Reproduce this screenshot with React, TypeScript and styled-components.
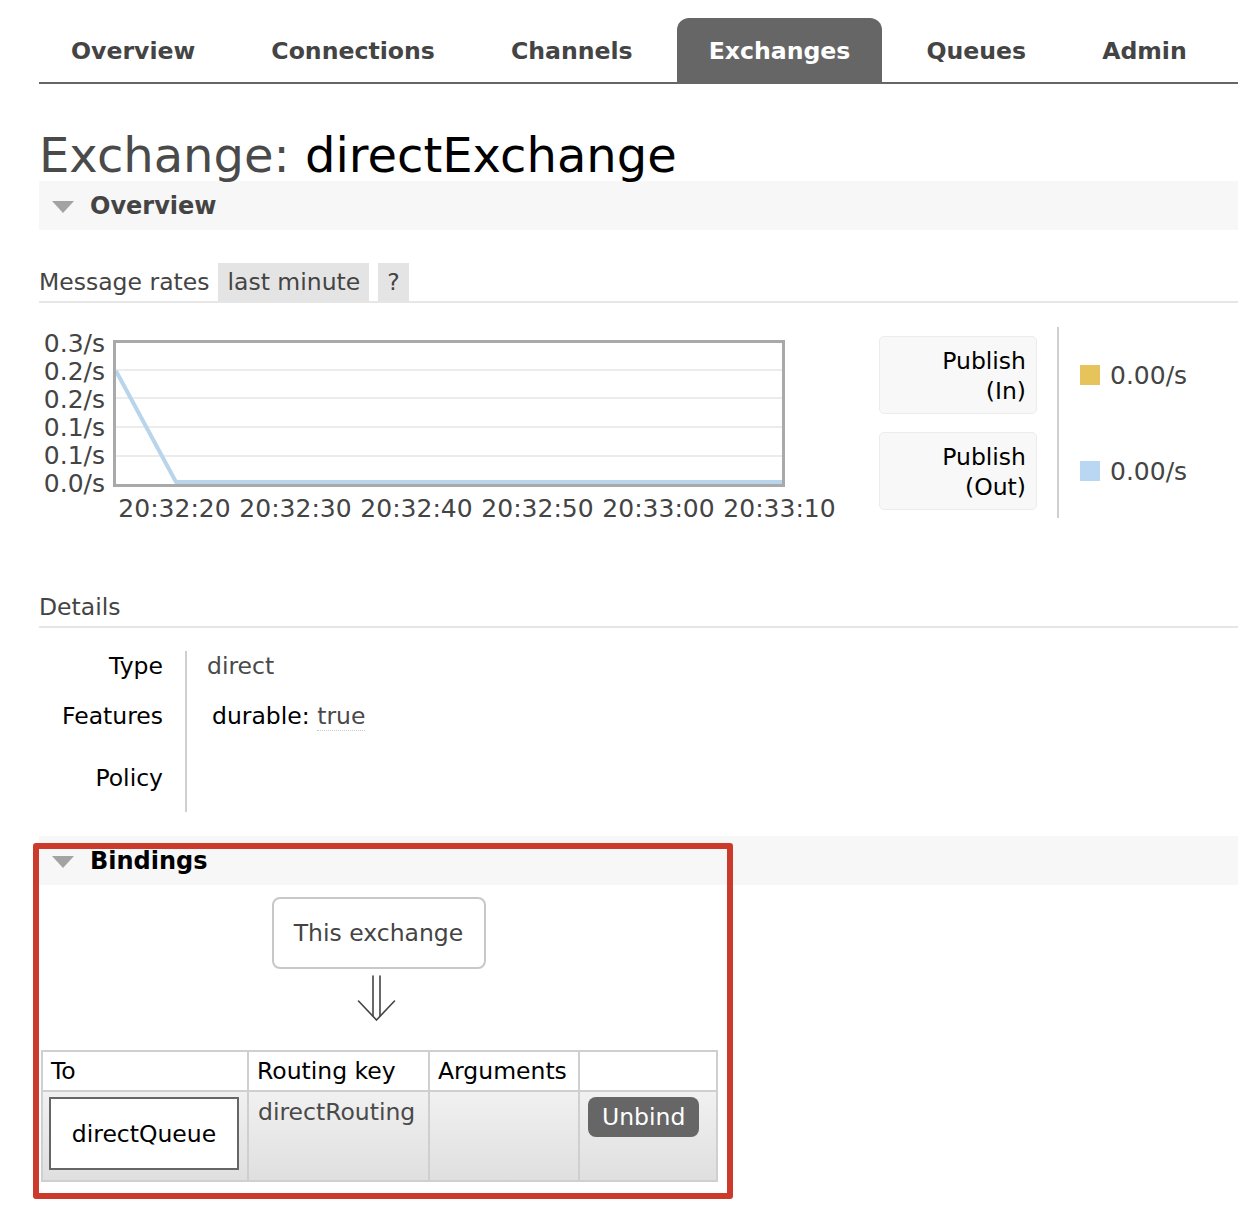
import React from 'react';
import styled, { createGlobalStyle } from 'styled-components';

const FONT = '"DejaVu Sans", Verdana, sans-serif';

const GlobalStyle = createGlobalStyle`
  html, body {
    margin: 0;
    padding: 0;
    background: #fff;
  }
  body {
    font-family: ${FONT};
    color: #000;
  }
`;

const Page = styled.div`
  width: 1199px;
  padding: 0 0 11px 39px;
  font-family: ${FONT};
  font-size: 23.5px;
`;

const Menu = styled.ul`
  display: flex;
  gap: 12px;
  margin: 18px 0 0;
  padding: 0;
  list-style: none;
  border-bottom: 2px solid #666;
`;

const MenuTab = styled.li<{ $active?: boolean }>`
  height: 61px;
  padding: 3px 32px 0;
  line-height: 61px;
  font-size: 23.6px;
  font-weight: bold;
  color: ${(p) => (p.$active ? '#fff' : '#444')};
  background: ${(p) => (p.$active ? '#666' : 'transparent')};
  border-radius: 12px 12px 0 0;
`;

const Title = styled.h1`
  margin: 0;
  padding-top: 46px;
  font-size: 48px;
  font-weight: normal;
  line-height: 51px;
  color: #000;
`;

const TitleKind = styled.span`
  color: #4a4a4a;
`;

const SectionBar = styled.div<{ $strong?: boolean }>`
  display: flex;
  align-items: center;
  gap: 16px;
  height: 49px;
  padding-left: 13px;
  background: #f7f7f7;
  font-size: 24px;
  font-weight: bold;
  color: ${(p) => (p.$strong ? '#000' : '#444')};
`;

const Toggle = styled.span`
  width: 0;
  height: 0;
  margin-top: 2px;
  border-left: 11px solid transparent;
  border-right: 11px solid transparent;
  border-top: 12px solid #a3a3a3;
`;

const SubHeading = styled.div<{ $top: number }>`
  display: flex;
  align-items: center;
  gap: 9px;
  height: 38px;
  margin-top: ${(p) => p.$top}px;
  border-bottom: 2px solid #e6e6e6;
  color: #444;
`;

const Pill = styled.span`
  height: 38px;
  line-height: 38px;
  padding: 0 9px;
  background: #e4e4e4;
  color: #444;
`;

const ChartRow = styled.div`
  display: flex;
  align-items: flex-start;
  margin-top: 24px;
`;

const ChartBlock = styled.div`
  display: flex;
  gap: 8px;
  margin-top: 3px;
  font-size: 25px;
  color: #444;
`;

const YAxis = styled.div`
  display: flex;
  flex-direction: column;
  width: 66px;
  text-align: right;
  line-height: 28px;
`;

const PlotColumn = styled.div`
  display: flex;
  flex-direction: column;
  align-items: flex-start;
`;

const Plot = styled.div`
  width: 672px;
  height: 147px;
  margin-top: 10px;
  box-sizing: border-box;
  border: 3px solid #a9a9a9;
  background: #fff;

  svg {
    display: block;
  }
`;

const XAxis = styled.div`
  display: flex;
  margin: 7px 0 0 1px;
  line-height: 30px;
`;

const XTick = styled.span`
  width: 121px;
  text-align: center;
  white-space: nowrap;
`;

const Legend = styled.div`
  display: flex;
  margin-left: 39px;
`;

const LegendLabels = styled.div`
  display: flex;
  flex-direction: column;
  gap: 18px;
  padding: 9px 20px 8px 0;
`;

const LegendLabel = styled.div`
  width: 158px;
  height: 78px;
  box-sizing: border-box;
  padding: 9px 10px;
  background: #f8f8f8;
  border: 1px solid #ececec;
  border-radius: 5px;
  text-align: right;
  line-height: 30px;
`;

const LegendValues = styled.div`
  display: flex;
  flex-direction: column;
  gap: 18px;
  padding: 9px 0 8px 21px;
  border-left: 2px solid #cfcfcf;
`;

const LegendValue = styled.div`
  display: flex;
  align-items: center;
  gap: 10px;
  height: 78px;
  font-size: 25px;
  color: #444;
`;

const Swatch = styled.span<{ $color: string }>`
  width: 20px;
  height: 20px;
  background: ${(p) => p.$color};
`;

const DetailsGrid = styled.div`
  display: grid;
  grid-template-columns: 148px auto;
  margin-top: 23px;
  line-height: 30px;
`;

const DetailLabel = styled.div<{ $height: number }>`
  height: ${(p) => p.$height}px;
  box-sizing: border-box;
  padding-right: 22px;
  border-right: 2px solid #cfcfcf;
  text-align: right;
  color: #000;
`;

const DetailValue = styled.div`
  padding-left: 20px;
  color: #4a4a4a;
`;

const Feature = styled.span`
  margin-left: 5px;
  color: #000;
`;

const FeatureValue = styled.span`
  color: #4a4a4a;
  border-bottom: 1px dotted #c8c8c8;
`;

const BindingsSection = styled.div`
  position: relative;
  margin-top: 24px;
  padding-bottom: 17px;
`;

const Highlight = styled.div`
  position: absolute;
  top: 7px;
  left: -6px;
  width: 700px;
  height: 356px;
  box-sizing: border-box;
  border: 6px solid #cb3a2b;
  border-radius: 3px;
  pointer-events: none;
`;

const BindingsBody = styled.div`
  display: flex;
  flex-direction: column;
  align-items: center;
  width: 675px;
  margin-left: 2px;
`;

const ExchangeNode = styled.div`
  width: 214px;
  height: 72px;
  margin-top: 12px;
  box-sizing: border-box;
  border: 2px solid #c8c8c8;
  border-radius: 8px;
  display: flex;
  align-items: center;
  justify-content: center;
  color: #444;
`;

const Arrow = styled.svg`
  display: block;
  margin: 6px 0 0 -3px;
`;

const BindTable = styled.table`
  align-self: stretch;
  width: 675px;
  margin-top: 29px;
  border-collapse: collapse;
  table-layout: fixed;
`;

const Th = styled.th`
  box-sizing: border-box;
  height: 40px;
  padding: 0 8px;
  border: 2px solid #cfcfcf;
  text-align: left;
  font-weight: normal;
  color: #000;
  background: #fff;
  white-space: nowrap;
`;

const BodyRow = styled.tr`
  background: linear-gradient(#f1f1f1, #dfdfdf);
`;

const Td = styled.td<{ $pad?: string }>`
  box-sizing: border-box;
  height: 90px;
  padding: ${(p) => p.$pad || '5px 8px 0 9px'};
  border: 2px solid #cfcfcf;
  vertical-align: top;
  line-height: 30px;
  color: #4a4a4a;
`;

const QueueBox = styled.div`
  height: 73px;
  box-sizing: border-box;
  border: 2px solid #666;
  background: #fff;
  display: flex;
  align-items: center;
  justify-content: center;
  color: #000;
`;

const Unbind = styled.button`
  height: 40px;
  padding: 0 14px;
  border: none;
  border-radius: 8px;
  background: #666;
  color: #fff;
  font-family: ${FONT};
  font-size: 23.5px;
`;

const tabs = ['Overview', 'Connections', 'Channels', 'Exchanges', 'Queues', 'Admin'];
const yTicks = ['0.3/s', '0.2/s', '0.2/s', '0.1/s', '0.1/s', '0.0/s'];
const xTicks = ['20:32:20', '20:32:30', '20:32:40', '20:32:50', '20:33:00', '20:33:10'];
const gridLines = [27, 55, 84, 113];
const columns = [206, 181, 150, 138];

export default function App() {
  return (
    <Page>
      <GlobalStyle />
      <Menu>
        {tabs.map((t) => (
          <MenuTab key={t} $active={t === 'Exchanges'}>
            {t}
          </MenuTab>
        ))}
      </Menu>

      <Title>
        <TitleKind>Exchange:</TitleKind> directExchange
      </Title>

      <SectionBar>
        <Toggle />
        Overview
      </SectionBar>

      <SubHeading $top={33}>
        Message rates
        <Pill>last minute</Pill>
        <Pill>?</Pill>
      </SubHeading>

      <ChartRow>
        <ChartBlock>
          <YAxis>
            {yTicks.map((t, i) => (
              <span key={i}>{t}</span>
            ))}
          </YAxis>
          <PlotColumn>
            <Plot>
              <svg width="666" height="141" viewBox="0 0 666 141">
                {gridLines.map((y) => (
                  <line key={y} x1="0" x2="666" y1={y} y2={y} stroke="#ececec" strokeWidth="2" />
                ))}
                <polyline
                  points="0,28 60,139 666,139"
                  fill="none"
                  stroke="#b9d5ec"
                  strokeWidth="4"
                  strokeLinejoin="round"
                />
              </svg>
            </Plot>
            <XAxis>
              {xTicks.map((t) => (
                <XTick key={t}>{t}</XTick>
              ))}
            </XAxis>
          </PlotColumn>
        </ChartBlock>

        <Legend>
          <LegendLabels>
            <LegendLabel>
              Publish
              <br />
              (In)
            </LegendLabel>
            <LegendLabel>
              Publish
              <br />
              (Out)
            </LegendLabel>
          </LegendLabels>
          <LegendValues>
            <LegendValue>
              <Swatch $color="#e7c35b" />
              0.00/s
            </LegendValue>
            <LegendValue>
              <Swatch $color="#b9d7f2" />
              0.00/s
            </LegendValue>
          </LegendValues>
        </Legend>
      </ChartRow>

      <SubHeading $top={64}>Details</SubHeading>

      <DetailsGrid>
        <DetailLabel $height={50}>Type</DetailLabel>
        <DetailValue>direct</DetailValue>
        <DetailLabel $height={62}>Features</DetailLabel>
        <DetailValue>
          <Feature>durable:</Feature> <FeatureValue>true</FeatureValue>
        </DetailValue>
        <DetailLabel $height={49}>Policy</DetailLabel>
        <DetailValue />
      </DetailsGrid>

      <BindingsSection>
        <SectionBar $strong>
          <Toggle />
          Bindings
        </SectionBar>
        <BindingsBody>
          <ExchangeNode>This exchange</ExchangeNode>
          <Arrow width="40" height="46" viewBox="0 0 40 46">
            <g stroke="#444" strokeWidth="1.6" fill="none" strokeLinecap="round">
              <line x1="16" y1="1" x2="16" y2="41" />
              <line x1="23" y1="1" x2="23" y2="41" />
              <polyline points="1.5,26 19.5,45 37.5,26" />
            </g>
          </Arrow>
          <BindTable>
            <colgroup>
              {columns.map((w, i) => (
                <col key={i} style={{ width: w }} />
              ))}
            </colgroup>
            <thead>
              <tr>
                <Th>To</Th>
                <Th>Routing key</Th>
                <Th>Arguments</Th>
                <Th />
              </tr>
            </thead>
            <tbody>
              <BodyRow>
                <Td $pad="5px 8px 0 6px">
                  <QueueBox>directQueue</QueueBox>
                </Td>
                <Td>directRouting</Td>
                <Td />
                <Td $pad="5px 8px 0 8px">
                  <Unbind>Unbind</Unbind>
                </Td>
              </BodyRow>
            </tbody>
          </BindTable>
        </BindingsBody>
        <Highlight />
      </BindingsSection>
    </Page>
  );
}
